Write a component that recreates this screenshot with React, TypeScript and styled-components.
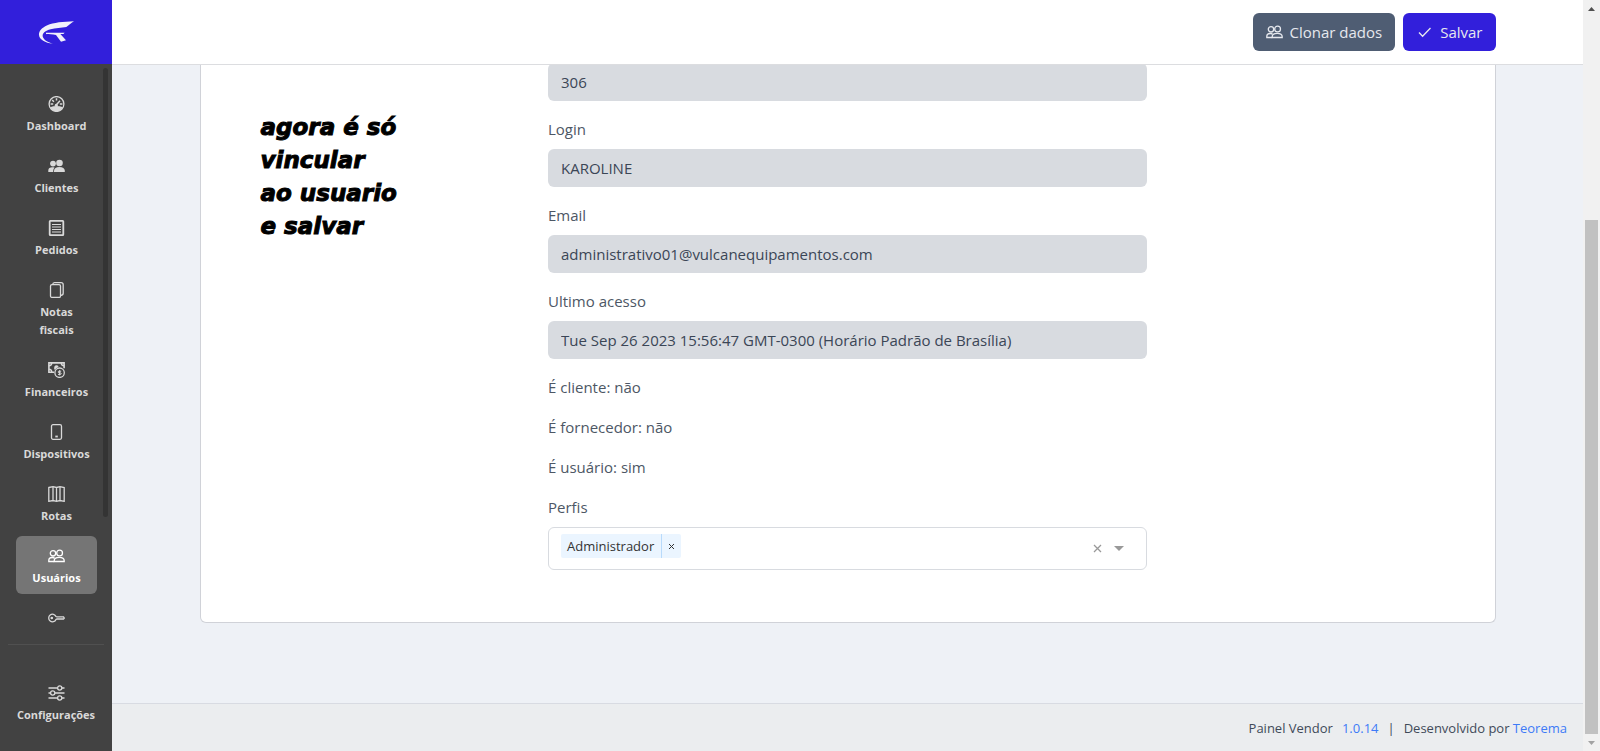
import React from "react";
import styled, { createGlobalStyle, css } from "styled-components";

const GlobalStyle = createGlobalStyle`
  *, *::before, *::after { box-sizing: border-box; }
  body {
    margin: 0;
    background: #eef1f6;
    color: #4d5765;
    font-family: "Open Sans", "Noto Sans", sans-serif;
    font-size: 15px;
    line-height: 24px;
  }
  button, input { font: inherit; color: inherit; }
  a { text-decoration: none; }
`;

const Shell = styled.div`
  display: grid;
  grid-template-columns: 112px minmax(0, 1fr) 17px;
  height: 100vh;
  overflow: hidden;
`;

/* ---------- Sidebar ---------- */

const Sidebar = styled.aside`
  display: flex;
  flex-direction: column;
  min-height: 0;
  background: #424242;
  color: #d9d9d9;
`;

const Brand = styled.a`
  display: flex;
  flex: none;
  align-items: center;
  justify-content: center;
  height: 64px;
  background: #321fdb;
`;

const NavScroller = styled.nav`
  position: relative;
  flex: 1;
  min-height: 0;
  padding: 20px 15px 0 16px;
  overflow: hidden;
`;

const NavThumb = styled.span`
  position: absolute;
  top: 4px;
  right: 4px;
  width: 5px;
  height: 79%;
  border-radius: 3px;
  background: #343434;
`;

const NavList = styled.ul`
  display: flex;
  flex-direction: column;
  gap: 4px;
  margin: 0;
  padding: 0;
  list-style: none;
`;

const NavLink = styled.a<{ $active?: boolean }>`
  display: flex;
  flex-direction: column;
  align-items: center;
  gap: 5px;
  padding: 12px 8px 7px;
  border-radius: 6px;
  color: inherit;
  font-size: 11px;
  font-weight: 700;
  line-height: 18px;
  text-align: center;
  ${(p) =>
    p.$active &&
    css`
      background: #757575;
      color: #fff;
    `}
`;

const NavFooter = styled.div`
  flex: none;
  margin: 12px 8px 0;
  padding: 28px 0 20px;
  border-top: 1px solid #505050;
`;

const Icon = styled.svg`
  display: block;
  flex: none;
  width: 17px;
  height: 16px;
  fill: none;
  stroke: currentColor;
  stroke-width: 1.3;
`;

/* ---------- Main ---------- */

const Main = styled.div`
  display: flex;
  flex-direction: column;
  min-width: 0;
  min-height: 0;
`;

const Header = styled.header`
  position: relative;
  z-index: 1;
  flex: none;
  height: 65px;
  background: #fff;
  border-bottom: 1px solid #dcdde0;
`;

const Container = styled.div`
  width: 100%;
  max-width: 1320px;
  margin: 0 auto;
  padding: 0 12px;
`;

const Toolbar = styled(Container)`
  display: flex;
  justify-content: flex-end;
  gap: 8px;
  padding-top: 13px;
`;

const Button = styled.button<{ $primary?: boolean }>`
  display: flex;
  align-items: center;
  gap: 7px;
  height: 38px;
  padding: 0 13px;
  border: 0;
  border-radius: 6px;
  background: ${(p) => (p.$primary ? "#321fdb" : "#4f5d73")};
  color: #e6e8ee;
`;

const Content = styled.main`
  flex: 1;
  min-height: 0;
`;

const Card = styled.section`
  display: grid;
  grid-template-columns: 1fr 2fr 1fr;
  margin-top: -2px;
  padding: 0 24px 36px;
  background: #fff;
  border: 1px solid #d0d2d8;
  border-top: 0;
  border-radius: 0 0 6px 6px;
`;

const Note = styled.p`
  margin: 0;
  padding: 48px 0 0 36px;
  color: #000;
  font-family: "DejaVu Sans", sans-serif;
  font-size: 23px;
  font-style: italic;
  font-weight: 700;
  line-height: 33px;
  -webkit-text-stroke: 1px #000;
`;

const Form = styled.form`
  padding: 0 12px;
`;

const Field = styled.div`
  margin-bottom: 16px;
`;

const Label = styled.label`
  display: block;
  margin-bottom: 8px;
`;

const ReadOnlyInput = styled.input`
  display: block;
  width: 100%;
  height: 38px;
  padding: 0 13px;
  border: 0;
  border-radius: 6px;
  background: #d8dbe0;
  color: #3b4656;
  outline: 0;
`;

const Fact = styled.p`
  margin: 0 0 16px;
`;

const MultiSelect = styled.div`
  display: flex;
  align-items: center;
  height: 43px;
  padding: 0 18px 0 12px;
  border: 1px solid #d8dbe0;
  border-radius: 6px;
`;

const Tag = styled.span`
  display: flex;
  align-self: flex-start;
  margin-top: 6px;
  border-radius: 2px;
  background: #ebf5ff;
  color: #333;
  font-size: 13px;
  line-height: 24px;
`;

const TagLabel = styled.span`
  padding: 0 7px 0 6px;
  border-right: 1px solid #b8dafb;
`;

const PlainButton = styled.button`
  display: flex;
  align-items: center;
  justify-content: center;
  width: 19px;
  padding: 0;
  border: 0;
  background: none;
`;

const SearchInput = styled.input`
  flex: 1;
  min-width: 0;
  border: 0;
  outline: 0;
  background: none;
`;

const SelectActions = styled.div`
  display: flex;
  gap: 2px;
  color: #999;
`;

const Footer = styled.footer`
  display: flex;
  flex: none;
  align-items: center;
  justify-content: flex-end;
  gap: 9px;
  height: 48px;
  padding: 0 16px;
  background: #ebedef;
  border-top: 1px solid #d8dbe2;
  color: #3f4a59;
  font-size: 13px;

  a { color: #3d7bf7; }
`;

/* ---------- Page scroll rail ---------- */

const Rail = styled.div`
  display: flex;
  flex-direction: column;
  background: #f1f1f1;
`;

const RailArrow = styled.span<{ $color: string }>`
  display: flex;
  flex: none;
  align-items: center;
  justify-content: center;
  height: 17px;
  color: ${(p) => p.$color};
`;

const RailSpace = styled.span`
  flex: 203;
`;

const RailThumb = styled.span`
  flex: 514;
  margin: 0 2px;
  background: #c1c1c1;
`;

/* ---------- Drawings ---------- */

const Logo = () => (
  <svg width="37" height="25" viewBox="114 60 111 75" fill="#f1f1fb" aria-hidden="true">
    <path d="M222 64C190 65 160 68 142 76C124 84 116 95 117 105C118 119 136 129 158 131C142 127 130 119 128 109C127 99 136 92 152 88C166 84 184 84 199 81C207 76 214 69 222 64Z" />
    <path d="M138 98H194L190 102H181L198 121L183 125L168 105C158 102 146 103 138 102Z" />
  </svg>
);

const icons: Record<string, React.ReactNode> = {
  speed: (
    <>
      <circle cx="8.5" cy="8" r="7.4" />
      <path d="M2 11.2Q8.500 8.800 15 11.2Q12.500 15.400 8.500 15.400T2 11.2Z" fill="currentColor" stroke="none" />
      <path d="M7.500 9.800L12 4.800M8.500 2.200v2.300M4.200 4l1.700 1.700M2.600 8h2.600M11.800 8h2.600" strokeWidth="1.500" />
      <circle cx="8.300" cy="9.200" r="1.500" fill="currentColor" stroke="none" />
    </>
  ),
  clients: (
    <g fill="currentColor" stroke="none">
      <circle cx="5" cy="5.600" r="2.900" />
      <circle cx="11.500" cy="5" r="3.300" />
      <path d="M.3 14v-1.600C.3 10.300 2 9.300 4.300 9.300c.9 0 1.700.1 2.300.4C5.600 10.600 5.200 11.500 5.200 14z" />
      <path d="M6 14v-1.200c0-2.400 2-3.800 5.400-3.800s5.400 1.400 5.400 3.800V14z" />
    </g>
  ),
  orders: (
    <>
      <rect x="1.700" y=".9" width="13.600" height="14.200" rx=".6" strokeWidth="1.800" />
      <path d="M4 4.500h9M4 7h9M4 9.500h9M4 12h9" strokeWidth="1.200" />
    </>
  ),
  copy: (
    <>
      <rect x="2.500" y="2.600" width="10" height="12.800" rx="1.500" />
      <path d="M4.700 2.600Q4.800.7 6.500.7h6.500q2.200 0 2.200 2v8.500q0 2-2.500 2.300" />
    </>
  ),
  money: (
    <>
      <path d="M6 10.200H.9V.9h15.200v5.400" strokeWidth="1.600" />
      <path d="M.8 3.800Q3.800 3.800 3.800.8M13.200.8Q13.200 3.800 16.200 3.800M.8 7.200Q3.800 7.200 3.800 10.200" strokeWidth="1.500" />
      <path d="M6.200 7.200Q5.800 3.200 8.500 3.200Q10.500 3.200 10.600 5Q7.800 6 7 7.800Z" fill="currentColor" stroke="none" />
      <circle cx="11.600" cy="10.700" r="4.700" />
      <path d="M13.200 9.200h-2q-1 0-1 .8t1 .8h1q1 0 1 .8t-1 .8H10M11.600 8.200v5.200" strokeWidth="1" />
    </>
  ),
  device: (
    <>
      <rect x="3.500" y=".7" width="10" height="14.600" rx="1.500" />
      <path d="M7.300 12.500h2.500" strokeWidth="1.800" />
    </>
  ),
  map: (
    <path d="M.8 1.500l4.200-.8 3.500.8 3.500-.8 4.200.8v13.800l-4.200-.8-3.500.8-3.500-.8-4.200.8zM5 .7v13.800M8.500 1.500v13.800M12 .7v13.800" />
  ),
  people: (
    <>
      <circle cx="5" cy="5.300" r="2.700" />
      <circle cx="11.600" cy="5" r="2.900" />
      <path d="M6.200 13.500H.8v-1c0-1.800 1.400-3 3.400-3 1 0 1.800.2 2.400.7" />
      <path d="M6.200 13.500v-.8c0-2 1.800-3.400 5-3.400s5 1.400 5 3.400v.8z" />
    </>
  ),
  key: (
    <>
      <path d="M8 6.500A3.800 3.800 0 1 0 8 9.500L9 9h6.500l.8-.9-.8-1.300H9z" />
      <circle cx="3.800" cy="8" r=".7" />
    </>
  ),
  sliders: (
    <>
      <path d="M.5 3h9M14 3h2.500M.5 8H2.500M7 8h9.500M.5 13h9M14 13h2.500" />
      <circle cx="11.700" cy="3" r="2.100" />
      <circle cx="4.700" cy="8" r="2.100" />
      <circle cx="11.700" cy="13" r="2.100" />
    </>
  ),
  check: <path d="M3 8.500l3.600 3.700L14.500 4" />,
};

const Glyph = ({ name }: { name: string }) => (
  <Icon viewBox="0 0 17 16" aria-hidden="true">
    {icons[name]}
  </Icon>
);

const navItems = [
  { icon: "speed", label: "Dashboard" },
  { icon: "clients", label: "Clientes" },
  { icon: "orders", label: "Pedidos" },
  { icon: "copy", label: <>Notas<br />fiscais</> },
  { icon: "money", label: "Financeiros" },
  { icon: "device", label: "Dispositivos" },
  { icon: "map", label: "Rotas" },
  { icon: "people", label: "Usuários", active: true },
];

const fields = [
  { id: "login", label: "Login", value: "KAROLINE" },
  { id: "email", label: "Email", value: "administrativo01@vulcanequipamentos.com" },
  {
    id: "ultimo-acesso",
    label: "Ultimo acesso",
    value: "Tue Sep 26 2023 15:56:47 GMT-0300 (Horário Padrão de Brasília)",
  },
];

export default function App() {
  return (
    <>
      <GlobalStyle />
      <Shell>
        <Sidebar>
          <Brand href="#" aria-label="Teorema">
            <Logo />
          </Brand>
          <NavScroller>
            <NavList>
              {navItems.map((item) => (
                <li key={item.icon}>
                  <NavLink href="#" $active={item.active}>
                    <Glyph name={item.icon} />
                    <span>{item.label}</span>
                  </NavLink>
                </li>
              ))}
              <li>
                <NavLink href="#" aria-label="Chaves">
                  <Glyph name="key" />
                </NavLink>
              </li>
            </NavList>
            <NavThumb />
          </NavScroller>
          <NavFooter>
            <NavLink href="#">
              <Glyph name="sliders" />
              <span>Configurações</span>
            </NavLink>
          </NavFooter>
        </Sidebar>

        <Main>
          <Header>
            <Toolbar>
              <Button type="button">
                <Glyph name="people" />
                Clonar dados
              </Button>
              <Button type="button" $primary>
                <Glyph name="check" />
                Salvar
              </Button>
            </Toolbar>
          </Header>

          <Content>
            <Container>
              <Card>
                <Note>
                  agora é só
                  <br />
                  vincular
                  <br />
                  ao usuario
                  <br />e salvar
                </Note>
                <Form>
                  <Field>
                    <ReadOnlyInput aria-label="Id" readOnly value="306" />
                  </Field>
                  {fields.map((field) => (
                    <Field key={field.id}>
                      <Label htmlFor={field.id}>{field.label}</Label>
                      <ReadOnlyInput id={field.id} readOnly value={field.value} />
                    </Field>
                  ))}
                  <Fact>É cliente: não</Fact>
                  <Fact>É fornecedor: não</Fact>
                  <Fact>É usuário: sim</Fact>
                  <Field>
                    <Label htmlFor="perfis">Perfis</Label>
                    <MultiSelect>
                      <Tag>
                        <TagLabel>Administrador</TagLabel>
                        <PlainButton type="button" aria-label="Remover Administrador">
                          <svg width="7" height="7" viewBox="0 0 7 7" stroke="#333" fill="none">
                            <path d="M1 1l5 5M6 1L1 6" />
                          </svg>
                        </PlainButton>
                      </Tag>
                      <SearchInput id="perfis" type="text" role="combobox" aria-expanded="false" />
                      <SelectActions>
                        <PlainButton type="button" aria-label="Limpar">
                          <svg width="9" height="9" viewBox="0 0 9 9" stroke="currentColor" fill="none">
                            <path d="M1 1l7 7M8 1L1 8" strokeWidth="1.300" />
                          </svg>
                        </PlainButton>
                        <PlainButton type="button" aria-label="Abrir opções">
                          <svg width="10" height="5" viewBox="0 0 10 5" fill="currentColor">
                            <path d="M0 0h10L5 5z" />
                          </svg>
                        </PlainButton>
                      </SelectActions>
                    </MultiSelect>
                  </Field>
                </Form>
              </Card>
            </Container>
          </Content>

          <Footer>
            <span>Painel Vendor</span>
            <a href="#">1.0.14</a>
            <span>|</span>
            <span>
              Desenvolvido por <a href="#">Teorema</a>
            </span>
          </Footer>
        </Main>

        <Rail aria-hidden="true">
          <RailArrow $color="#505050">
            <svg width="7" height="4" viewBox="0 0 7 4" fill="currentColor">
              <path d="M0 4h7L3.500 0z" />
            </svg>
          </RailArrow>
          <RailSpace />
          <RailThumb />
          <RailArrow $color="#a3a3a3">
            <svg width="7" height="4" viewBox="0 0 7 4" fill="currentColor">
              <path d="M0 0h7L3.500 4z" />
            </svg>
          </RailArrow>
        </Rail>
      </Shell>
    </>
  );
}
